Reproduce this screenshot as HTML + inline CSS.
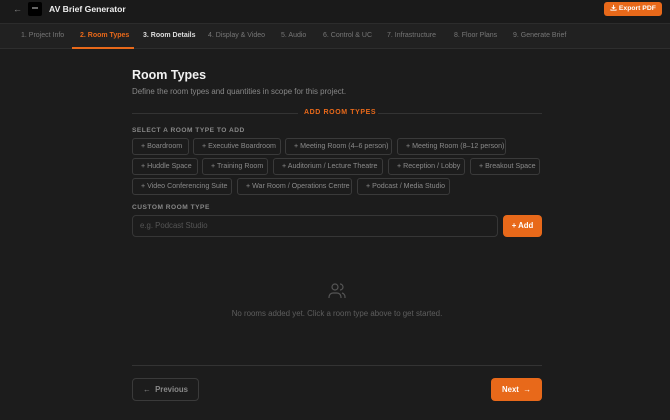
<!DOCTYPE html><html><head><style>
*{margin:0;padding:0;box-sizing:border-box}
body{width:670px;height:420px;background:#1c1c1c;font-family:"Liberation Sans",sans-serif;position:relative;overflow:hidden;color:#ddd}
.a{position:absolute}
.hdr{left:0;top:0;width:670px;height:24px;background:#1a1a1a;border-bottom:1px solid #2c2c2c}
.nav{left:0;top:24px;width:670px;height:25px;background:#212121;border-bottom:1px solid #2e2e2e}
.tab{position:absolute;top:32px;font-size:7px;color:#777}
.chip{position:absolute;height:17px;border:1px solid #3a3a3a;border-radius:3px;font-size:7.1px;color:#8a8a8a;line-height:15px;padding-left:8px;white-space:nowrap}
.lbl{font-size:6.6px;font-weight:bold;letter-spacing:.5px;color:#888}
</style></head><body>
<div class="a hdr"></div>
<div class="a" style="left:13px;top:4px;font-size:9px;color:#888">←</div>
<div class="a" style="left:28px;top:2px;width:14px;height:14px;background:#000;border-radius:2px"></div>
<div class="a" style="left:32px;top:7px;width:6px;height:2px;background:#666"></div>
<div class="a" style="left:49px;top:4px;font-size:8.6px;font-weight:bold;color:#eee">AV Brief Generator</div>
<div class="a" style="left:604px;top:2px;width:58px;height:14px;background:#e8691a;border-radius:3px;color:#fff;font-size:6.8px;font-weight:bold;line-height:14px;padding-left:6px;white-space:nowrap"><svg width="7" height="7" viewBox="0 0 8 8" style="vertical-align:-1px"><path d="M4 1v4M2 3.5l2 2 2-2M1 6v1h6V6" stroke="#fff" fill="none" stroke-width="1"/></svg> Export PDF</div>
<div class="a nav"></div>
<div class="tab" style="left:21px">1. Project Info</div>
<div class="tab" style="left:80px;color:#e8691a;font-weight:bold">2. Room Types</div>
<div class="a" style="left:72px;top:47px;width:62px;height:2px;background:#e8691a"></div>
<div class="tab" style="left:143px;color:#ddd;font-weight:bold">3. Room Details</div>
<div class="tab" style="left:208px">4. Display &amp; Video</div>
<div class="tab" style="left:281px">5. Audio</div>
<div class="tab" style="left:323px">6. Control &amp; UC</div>
<div class="tab" style="left:387px">7. Infrastructure</div>
<div class="tab" style="left:454px">8. Floor Plans</div>
<div class="tab" style="left:513px">9. Generate Brief</div>
<div class="a" style="left:132px;top:68px;font-size:12.5px;font-weight:bold;color:#f2f2f2">Room Types</div>
<div class="a" style="left:132px;top:87px;font-size:7.9px;color:#888">Define the room types and quantities in scope for this project.</div>
<div class="a" style="left:132px;top:113px;width:166px;height:1px;background:#333"></div>
<div class="a" style="left:378px;top:113px;width:164px;height:1px;background:#333"></div>
<div class="a" style="left:304px;top:109px;font-size:7px;font-weight:bold;color:#e8691a;letter-spacing:.6px">ADD ROOM TYPES</div>
<div class="a lbl" style="left:132px;top:127px">SELECT A ROOM TYPE TO ADD</div>
<div class="chip" style="left:132px;top:138px;width:57px">+ Boardroom</div>
<div class="chip" style="left:193px;top:138px;width:88px">+ Executive Boardroom</div>
<div class="chip" style="left:285px;top:138px;width:107px">+ Meeting Room (4–6 person)</div>
<div class="chip" style="left:397px;top:138px;width:109px">+ Meeting Room (8–12 person)</div>
<div class="chip" style="left:132px;top:158px;width:66px">+ Huddle Space</div>
<div class="chip" style="left:202px;top:158px;width:66px">+ Training Room</div>
<div class="chip" style="left:273px;top:158px;width:110px">+ Auditorium / Lecture Theatre</div>
<div class="chip" style="left:388px;top:158px;width:77px">+ Reception / Lobby</div>
<div class="chip" style="left:470px;top:158px;width:70px">+ Breakout Space</div>
<div class="chip" style="left:132px;top:178px;width:100px">+ Video Conferencing Suite</div>
<div class="chip" style="left:237px;top:178px;width:115px">+ War Room / Operations Centre</div>
<div class="chip" style="left:357px;top:178px;width:93px">+ Podcast / Media Studio</div>
<div class="a lbl" style="left:132px;top:204px">CUSTOM ROOM TYPE</div>
<div class="a" style="left:132px;top:215px;width:366px;height:22px;border:1px solid #363636;border-radius:4px;font-size:7.8px;color:#555;line-height:20px;padding-left:7px">e.g. Podcast Studio</div>
<div class="a" style="left:503px;top:215px;width:39px;height:22px;background:#e8691a;border-radius:4px;color:#fff;font-size:7.8px;font-weight:bold;line-height:22px;text-align:center">+ Add</div>
<svg class="a" style="left:327px;top:281px" width="20" height="20" viewBox="0 0 20 20" fill="none" stroke="#555" stroke-width="1.2"><circle cx="8" cy="6" r="3"/><path d="M2 17v-1a4 4 0 0 1 4-4h4a4 4 0 0 1 4 4v1M13 3a3 3 0 0 1 0 6M18 17v-1a4 4 0 0 0-3-4"/></svg>
<div class="a" style="left:0;width:674px;text-align:center;top:309px;font-size:7.9px;color:#5e5e5e">No rooms added yet. Click a room type above to get started.</div>
<div class="a" style="left:132px;top:365px;width:410px;height:1px;background:#333"></div>
<div class="a" style="left:132px;top:378px;width:67px;height:23px;border:1px solid #3a3a3a;border-radius:4px;font-size:7.8px;font-weight:bold;color:#888;line-height:21px;text-align:center">←&nbsp; Previous</div>
<div class="a" style="left:491px;top:378px;width:51px;height:23px;background:#e8691a;border-radius:4px;font-size:7.8px;font-weight:bold;color:#fff;line-height:23px;text-align:center">Next &nbsp;→</div>
</body></html>
